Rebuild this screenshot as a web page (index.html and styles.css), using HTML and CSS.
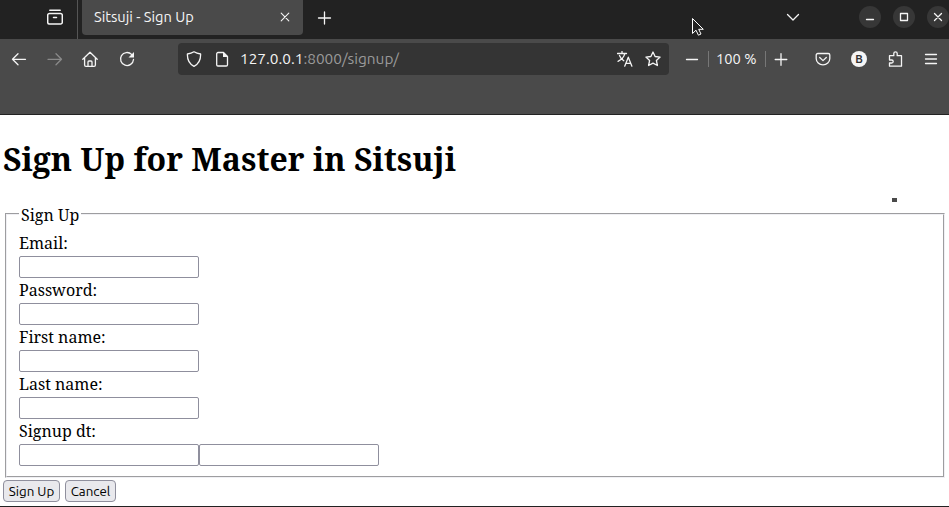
FILE: index.html
```html
<!DOCTYPE html>
<html lang="en">
<head>
<meta charset="utf-8">
<title>Sitsuji - Sign Up</title>
<link rel="stylesheet" href="styles.css">
</head>
<body>
<div class="window">
  <header class="tabbar">
    <svg class="icon view" viewBox="0 0 16 16"><path d="M2.800 1.300h10.400M2.500 4.500h11a1.800 1.800 0 0 1 1.800 1.800v7a1.800 1.800 0 0 1-1.800 1.800h-11a1.800 1.800 0 0 1-1.800-1.800v-7a1.800 1.800 0 0 1 1.800-1.800zM6.500 8.500h3"/></svg>
    <div class="tab">
      <span class="tab-title">Sitsuji - Sign Up</span>
      <svg class="icon close" viewBox="0 0 16 16"><path d="M4.200 4.200l7.600 7.600M11.800 4.200l-7.600 7.600"/></svg>
    </div>
    <svg class="icon newtab" viewBox="0 0 16 16"><path d="M8.500 2v12M2.500 8h12"/></svg>
    <svg class="icon chevron" viewBox="0 0 16 16"><path d="M2.500 5.500L8 11l5.500-5.500"/></svg>
    <div class="controls">
      <span class="control"><svg class="icon" viewBox="0 0 16 16"><path d="M4.500 10.500h7"/></svg></span>
      <span class="control"><svg class="icon" viewBox="0 0 16 16"><path d="M4.500 4.500h7v7h-7z"/></svg></span>
      <span class="control"><svg class="icon" viewBox="0 0 16 16"><path d="M4.500 4.500l7 7M11.500 4.500l-7 7"/></svg></span>
    </div>
    <svg class="cursor" viewBox="0 0 14 20"><path d="M1.500 1.500v15l3.500-3.300 2.400 5 2.600-1.200-2.300-4.700h4.600z"/></svg>
  </header>
  <nav class="toolbar">
    <svg class="icon back" viewBox="0 0 16 16"><path d="M14.500 8.300H1.500M7 2.800L1.500 8.300l5.500 5.500"/></svg>
    <svg class="icon forward" viewBox="0 0 16 16"><path d="M1 8.300h13.500M9 2.800l5.500 5.500-5.500 5.500"/></svg>
    <svg class="icon home" viewBox="0 0 16 16"><path d="M.8 8.200L8 1.200l7.200 7M2.600 7v7a1.300 1.300 0 0 0 1.300 1.300h8.200a1.300 1.300 0 0 0 1.300-1.300V7M6 15v-4a1 1 0 0 1 1-1h2a1 1 0 0 1 1 1v4"/></svg>
    <svg class="icon reload" viewBox="0 0 16 16"><path d="M14.500 8.500A6.500 6.500 0 1 1 12.600 3.400L14 4.800"/><path class="solid" d="M15 1v5.500H9.500z"/></svg>
    <div class="urlbar">
      <svg class="icon" viewBox="0 0 16 16"><path d="M8 .8c2 1.300 4 1.900 6.600 2.200.2 5.200-1.400 9.800-6.600 12.400C2.800 12.800 1.200 8.200 1.400 3 4 2.700 6 2.100 8 .8z"/></svg>
      <svg class="icon doc" viewBox="0 0 16 16"><path d="M9.500 1.500H4A1.300 1.300 0 0 0 2.700 2.800v10.900A1.300 1.300 0 0 0 4 15h8.200a1.300 1.300 0 0 0 1.300-1.300V5.500z"/><path class="solid" d="M9 1l5 5H9z"/></svg>
      <span class="url">127.0.0.1<span class="path">:8000/signup/</span></span>
      <svg class="icon translate" viewBox="0 0 16 16"><path d="M.5 2.500h9M5 .5v2M7.800 2.700C7 6.200 4.300 8.800 1 10.300M2.500 4.500c.9 2.500 2.300 4 4.300 5.200M7.700 15.200l3.600-9 3.600 9M9 12.300h4.700"/></svg>
      <svg class="icon star" viewBox="0 0 16 16"><path d="M8 1l2.100 4.500 5 .6-3.700 3.400 1 5L8 12.100l-4.400 2.400 1-5L.9 6.100l5-.6z"/></svg>
    </div>
    <svg class="icon minus" viewBox="0 0 16 16"><path d="M2.500 8.500h11"/></svg>
    <div class="zoom">100 %</div>
    <svg class="icon plus" viewBox="0 0 16 16"><path d="M8 2.700v11.600M2.200 8.500h11.600"/></svg>
    <svg class="icon pocket" viewBox="0 0 16 16"><path d="M2.800 2.500h10.400a1.600 1.600 0 0 1 1.600 1.600v3.300a6.800 6.500 0 0 1-13.600 0V4.100A1.600 1.600 0 0 1 2.800 2.500zM4.700 6.500L8 9.600l3.300-3.100"/></svg>
    <span class="account">B</span>
    <svg class="icon puzzle" viewBox="0 0 16 16"><path d="M1.500 7V4.700h4.300V2.500a1.700 1.700 0 0 1 3.400 0v2.200h4.300v10.500h-12v-3.200h2.200a1.500 1.500 0 0 0 0-3H1.500z"/></svg>
    <svg class="icon menu" viewBox="0 0 16 16"><path d="M2.500 3.500h11M2.500 8h11M2.500 12.500h11"/></svg>
  </nav>
  <main class="page">
    <h1 class="heading">Sign Up for Master in Sitsuji</h1>
    <span class="speck"></span>
    <form class="form">
      <fieldset class="fields">
        <legend class="legend">Sign Up</legend>
        <label class="label" for="email">Email:</label>
        <input class="input" id="email">
        <label class="label" for="password">Password:</label>
        <input class="input" id="password" type="password">
        <label class="label" for="first">First name:</label>
        <input class="input" id="first">
        <label class="label" for="last">Last name:</label>
        <input class="input" id="last">
        <label class="label" for="date">Signup dt:</label>
        <div class="pair"><input class="input" id="date"><input class="input"></div>
      </fieldset>
      <div class="actions">
        <button class="button submit" type="button">Sign Up</button>
        <button class="button cancel" type="button">Cancel</button>
      </div>
    </form>
  </main>
</div>
</body>
</html>
```
FILE: styles.css
```css
* { box-sizing: border-box; }
body { margin: 0; background: #fff; overflow: hidden; }
.window {
  height: 507px;
  display: flex;
  flex-direction: column;
  border-bottom: 1px solid #222;
  font-family: Ubuntu, "Noto Sans", sans-serif;
}
.icon {
  width: 16px;
  height: 16px;
  flex: none;
  display: block;
  fill: none;
  stroke: #f5f5f5;
  stroke-width: 1.3;
  stroke-linecap: round;
  stroke-linejoin: round;
}
.solid { fill: #f5f5f5; stroke: none; }

.tabbar {
  position: relative;
  height: 39px;
  flex: none;
  display: flex;
  align-items: flex-start;
  background: #222;
}
.view { margin: 9px 0 0 47px; stroke-width: 1.5; }
.tab {
  width: 221px;
  height: 35px;
  margin-left: 19px;
  padding: 0 10px 0 12px;
  display: flex;
  align-items: center;
  justify-content: space-between;
  background: #4a4a4a;
  border-radius: 0 0 4px 4px;
  position: relative;
}
.tab::before {
  content: "";
  position: absolute;
  left: -5px;
  top: 0;
  width: 1px;
  height: 39px;
  background: #555;
}
.tab-title { padding-bottom: 2px; font-size: 14.667px; line-height: 33px; color: #f5f5f5; white-space: nowrap; }
.close { margin-bottom: 1px; stroke-width: 1.1; }
.newtab { margin: 10px 0 0 13px; }
.chevron { margin: 9px 0 0 453px; }
.controls { display: flex; gap: 12px; margin: 6px 0 0 58px; }
.control {
  width: 22px;
  height: 22px;
  flex: none;
  display: grid;
  place-items: center;
  border-radius: 50%;
  background: #373737;
}
.cursor { position: absolute; left: 691px; top: 17px; width: 14px; height: 20px; fill: #222; stroke: #fff; stroke-width: 1; }

.toolbar {
  height: 76px;
  flex: none;
  display: flex;
  align-items: center;
  padding-bottom: 35px;
  background: #4a4a4a;
  border-bottom: 1px solid #222;
}
.back { margin-left: 11px; }
.forward { margin-left: 20px; stroke: #8a8a8a; }
.home { margin-left: 19px; }
.reload { margin-left: 21px; }
.urlbar {
  width: 491px;
  height: 32px;
  flex: none;
  margin-left: 43px;
  padding: 0 8px;
  display: flex;
  align-items: center;
  background: #343434;
  border-radius: 4px;
}
.doc { margin-left: 12px; }
.url { margin-left: 10px; font-size: 15.4px; line-height: 18px; color: #f5f5f5; white-space: nowrap; }
.path { color: #9a9a9a; }
.translate { margin-left: auto; }
.star { margin-left: 12px; }
.minus { margin-left: 15px; }
.zoom {
  width: 58px;
  height: 16px;
  flex: none;
  margin-left: 8px;
  padding-left: 7px;
  border: solid #777;
  border-width: 0 1px;
  font-size: 14.667px;
  line-height: 16px;
  color: #f5f5f5;
  white-space: nowrap;
}
.plus { margin-left: 7px; }
.pocket { margin-left: 26px; }
.account {
  width: 16px;
  height: 16px;
  flex: none;
  margin-left: 20px;
  border-radius: 50%;
  background: #f5f5f5;
  color: #333;
  font-family: "Liberation Sans", sans-serif;
  font-size: 10px;
  font-weight: 700;
  line-height: 17px;
  text-align: center;
}
.puzzle { margin-left: 21px; }
.menu { margin-left: 19px; }

.page {
  position: relative;
  flex: 1;
  padding: 0 3px;
  color: #000;
  font-family: "Noto Serif", "DejaVu Serif Condensed", "DejaVu Serif", serif;
}
.heading { margin: 22px 0 0; font-size: 32px; line-height: 44px; letter-spacing: 0.03px; white-space: nowrap; }
.speck { position: absolute; left: 892px; top: 83px; width: 5px; height: 4px; background: #4a4a4a; }
.form { margin-top: 23px; }
.fields {
  height: 274px;
  min-width: 0;
  margin: 0 1px 0 2px;
  padding: 7px 12px 0;
  border: 2px groove #f0f0f4;
}
.legend { height: 20px; padding: 0 2px; font-size: 16px; line-height: 22px; white-space: nowrap; }
.label { display: block; height: 25px; font-size: 16px; line-height: 25px; white-space: nowrap; }
.input {
  display: block;
  width: 180px;
  height: 22px;
  padding: 1px 2px;
  border: 1px solid #8f8f9d;
  border-radius: 2px;
  background: #fff;
}
.pair { display: flex; }
.actions { display: flex; gap: 5px; margin-top: 2px; }
.button {
  height: 22px;
  padding: 1px 0 0;
  border: 1px solid #8f8f9d;
  border-radius: 4px;
  background: #e9e9ed;
  color: #000;
  font-family: Ubuntu, "Noto Sans", sans-serif;
  font-size: 13.333px;
  line-height: 19px;
}
.submit { width: 57px; }
.cancel { width: 51px; }
```
